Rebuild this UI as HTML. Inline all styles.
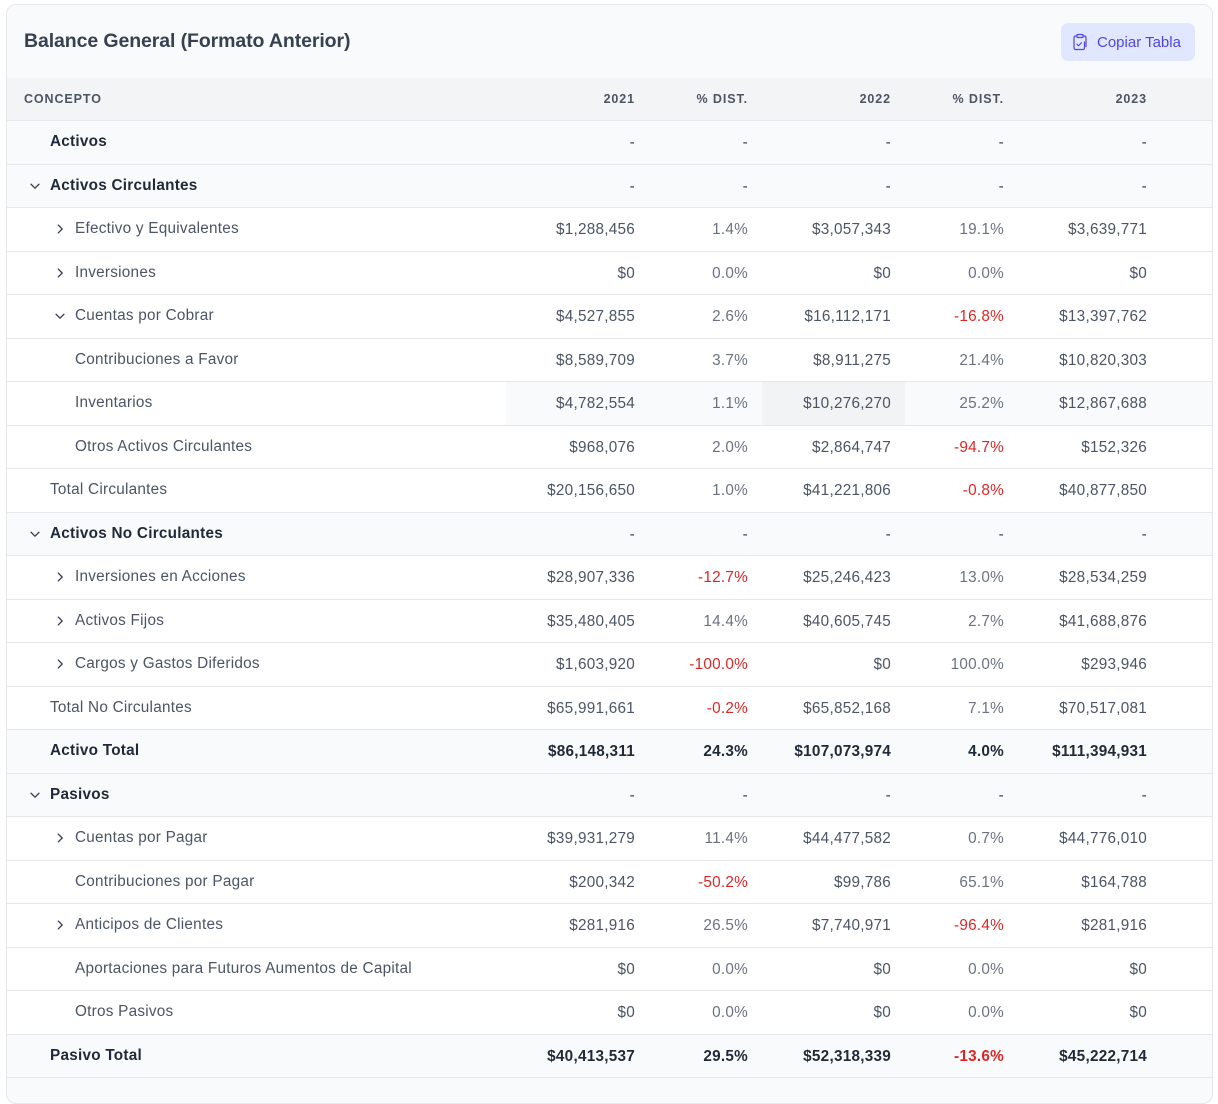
<!DOCTYPE html>
<html><head><meta charset="utf-8"><style>
*{box-sizing:border-box;margin:0;padding:0}
body{width:1218px;height:1071px;background:#fff;font-family:"Liberation Sans",Arial,sans-serif;overflow:hidden;position:relative}
.card{position:absolute;left:6px;top:4px;width:1207px;height:1100px;border:1px solid #e5e7eb;border-radius:10px;background:#f9fafb;overflow:hidden}
.title{position:absolute;left:17px;top:25px;font-size:19.5px;font-weight:600;color:#374151;letter-spacing:-0.1px}
.btn{position:absolute;left:1054px;top:18px;width:134px;height:38px;background:#e0e7ff;border-radius:7px;color:#4f46e5;font-size:15px;display:flex;align-items:center;padding-left:10px}
.btn svg{margin-right:8px}
.tbl{position:absolute;left:0;top:73px;width:1205px}
.r{display:flex;height:43.5px;border-bottom:1px solid #e5e7eb;background:#fff;align-items:center;font-size:15.3px;letter-spacing:0.25px;color:#4b5563}
.h{height:43px;background:#f3f4f6;font-size:12.5px;font-weight:600;letter-spacing:.9px;color:#4b5563}
.g{background:#f9fafb;font-weight:600;color:#1f2937}
.c{width:499px;display:flex;align-items:center;height:100%}
.n{width:143px;text-align:right;padding-right:14px;line-height:43px;height:100%}
.p{width:113px;text-align:right;padding-right:14px;line-height:43px;height:100%;color:#6b7280}
.g .p,.g .n{color:#1f2937}
.dash{font-weight:400;color:#374151!important}
.red{color:#dc2626!important}
.hv{background:#f8fafc}
.hv .c{background:#fff}
.dk{background:#f1f3f5}
.ch{width:14px;height:14px;margin-right:8px}
</style></head><body>
<div class="card">
<div class="title">Balance General (Formato Anterior)</div>
<div class="btn"><svg width="18" height="18" viewBox="0 0 24 24" fill="none" stroke="#4f46e5" stroke-width="1.6" stroke-linecap="round" stroke-linejoin="round"><rect x="8" y="2" width="8" height="4" rx="1"/><path d="M16 4h2a2 2 0 0 1 2 2v12"/><path d="M8 4H6a2 2 0 0 0-2 2v14a2 2 0 0 0 2 2h10a2 2 0 0 0 2-2v-8"/><path d="M8 15l2 2 4-4"/></svg>Copiar Tabla</div>
<div class="tbl">
<div class="r h"><div class="c" style="padding-left:17px">CONCEPTO</div><div class="n">2021</div><div class="p" style="color:#4b5563">% DIST.</div><div class="n">2022</div><div class="p" style="color:#4b5563">% DIST.</div><div class="n">2023</div></div>
</div>
</div>
<script>
const D='<svg class="ch" viewBox="0 0 16 16" fill="none" stroke="#374151" stroke-width="1.5" stroke-linecap="round" stroke-linejoin="round"><path d="M3.5 6l4.5 4.5L12.5 6"/></svg>';
const R='<svg class="ch" viewBox="0 0 16 16" fill="none" stroke="#374151" stroke-width="1.5" stroke-linecap="round" stroke-linejoin="round"><path d="M6 3.5l4.5 4.5L6 12.5"/></svg>';
const rows=[
["Activos",0,1,"-","-","-","-","-"],
["Activos Circulantes","d0",1,"-","-","-","-","-"],
["Efectivo y Equivalentes","r1",0,"$1,288,456","1.4%","$3,057,343","19.1%","$3,639,771"],
["Inversiones","r1",0,"$0","0.0%","$0","0.0%","$0"],
["Cuentas por Cobrar","d1",0,"$4,527,855","2.6%","$16,112,171","-16.8%","$13,397,762"],
["Contribuciones a Favor",1,0,"$8,589,709","3.7%","$8,911,275","21.4%","$10,820,303"],
["Inventarios",1,0,"$4,782,554","1.1%","$10,276,270","25.2%","$12,867,688","hv"],
["Otros Activos Circulantes",1,0,"$968,076","2.0%","$2,864,747","-94.7%","$152,326"],
["Total Circulantes",0,0,"$20,156,650","1.0%","$41,221,806","-0.8%","$40,877,850"],
["Activos No Circulantes","d0",1,"-","-","-","-","-"],
["Inversiones en Acciones","r1",0,"$28,907,336","-12.7%","$25,246,423","13.0%","$28,534,259"],
["Activos Fijos","r1",0,"$35,480,405","14.4%","$40,605,745","2.7%","$41,688,876"],
["Cargos y Gastos Diferidos","r1",0,"$1,603,920","-100.0%","$0","100.0%","$293,946"],
["Total No Circulantes",0,0,"$65,991,661","-0.2%","$65,852,168","7.1%","$70,517,081"],
["Activo Total",0,1,"$86,148,311","24.3%","$107,073,974","4.0%","$111,394,931"],
["Pasivos","d0",1,"-","-","-","-","-"],
["Cuentas por Pagar","r1",0,"$39,931,279","11.4%","$44,477,582","0.7%","$44,776,010"],
["Contribuciones por Pagar",1,0,"$200,342","-50.2%","$99,786","65.1%","$164,788"],
["Anticipos de Clientes","r1",0,"$281,916","26.5%","$7,740,971","-96.4%","$281,916"],
["Aportaciones para Futuros Aumentos de Capital",1,0,"$0","0.0%","$0","0.0%","$0"],
["Otros Pasivos",1,0,"$0","0.0%","$0","0.0%","$0"],
["Pasivo Total",0,1,"$40,413,537","29.5%","$52,318,339","-13.6%","$45,222,714"]
];
const t=document.querySelector('.tbl');let h='';
for(const r of rows){
 let lab;
 if(r[1]===0)lab='<div class="c" style="padding-left:43px">'+r[0]+'</div>';
 else if(r[1]==='d0')lab='<div class="c" style="padding-left:21px">'+D+r[0]+'</div>';
 else if(r[1]===1)lab='<div class="c" style="padding-left:68px">'+r[0]+'</div>';
 else lab='<div class="c" style="padding-left:46px">'+(r[1]==='r1'?R:D)+r[0]+'</div>';
 const dc=v=>v==='-'?' dash':'';
 const pc=v=>'<div class="p'+(v.startsWith('-')&&v!=='-'?' red':'')+dc(v)+'">'+v+'</div>';
 h+='<div class="r'+(r[2]?' g':'')+(r[8]?' hv':'')+'">'+lab+'<div class="n'+dc(r[3])+'">'+r[3]+'</div>'+pc(r[4])+'<div class="n'+(r[8]?' dk':'')+dc(r[5])+'">'+r[5]+'</div>'+pc(r[6])+'<div class="n'+dc(r[7])+'">'+r[7]+'</div></div>';
}
t.insertAdjacentHTML('beforeend',h);
</script>
</body></html>
